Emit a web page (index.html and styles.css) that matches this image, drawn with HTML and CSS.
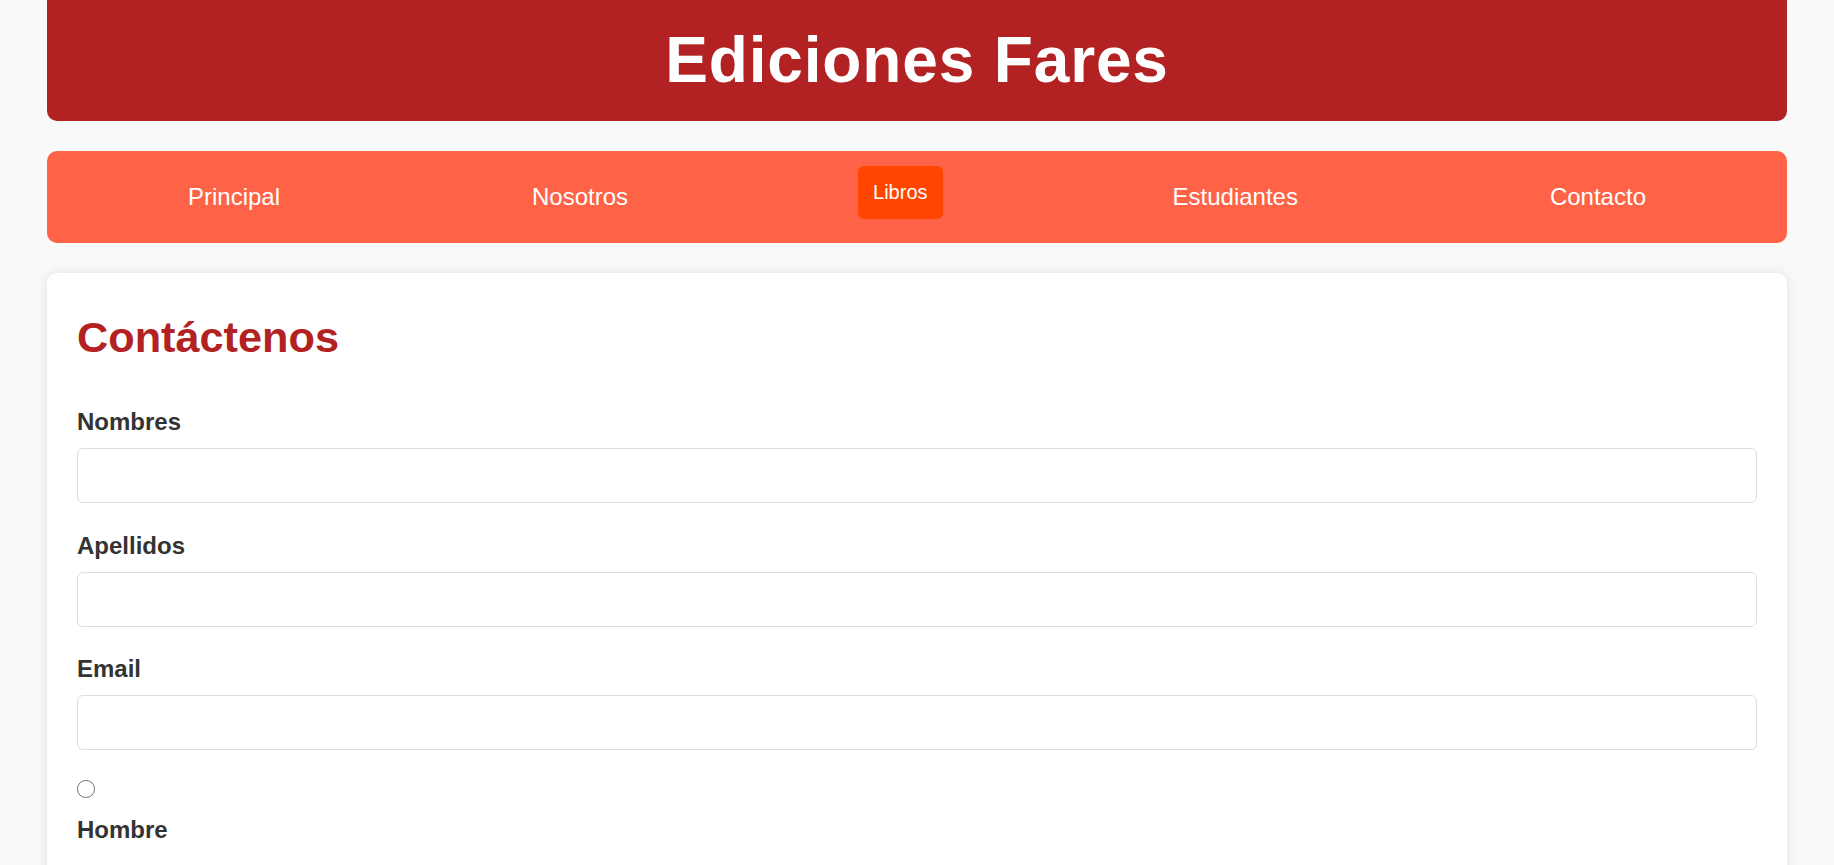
FILE: index.html
```html
<!DOCTYPE html>
<html lang="es">
<head>
<meta charset="utf-8">
<title>Ediciones Fares - Contacto</title>
<link rel="stylesheet" href="styles.css">
</head>
<body>
<div class="page">
  <header class="site-header">
    <h1 class="site-title">Ediciones Fares</h1>
  </header>
  <nav class="main-nav">
    <a class="nav-link" href="#">Principal</a>
    <a class="nav-link" href="#">Nosotros</a>
    <a class="nav-link nav-link-active" href="#">Libros</a>
    <a class="nav-link" href="#">Estudiantes</a>
    <a class="nav-link" href="#">Contacto</a>
  </nav>
  <main class="card">
    <h2 class="card-title">Contáctenos</h2>
    <form class="contact-form">
      <label class="field-label" for="nombres">Nombres</label>
      <input class="field-input" type="text" id="nombres">
      <label class="field-label" for="apellidos">Apellidos</label>
      <input class="field-input" type="text" id="apellidos">
      <label class="field-label" for="email">Email</label>
      <input class="field-input" type="email" id="email">
      <input class="radio" type="radio" name="sexo" id="hombre">
      <label class="field-label" for="hombre">Hombre</label>
    </form>
  </main>
</div>
</body>
</html>
```

FILE: styles.css
```css
html, body {
  margin: 0;
  padding: 0;
}

body {
  background: #f9f9f9;
  font-family: "Liberation Sans", Arial, sans-serif;
  color: #333;
  overflow: hidden;
}

.page {
  padding: 0 47px;
}

.site-header {
  background: #b22222;
  border-radius: 0 0 10px 10px;
  padding: 23px 0 24px;
  text-align: center;
}

.site-title {
  margin: 0;
  font-size: 64px;
  font-weight: bold;
  letter-spacing: 0.85px;
  line-height: normal;
  color: #fff;
}

.main-nav {
  margin-top: 30px;
  background: #ff6347;
  border-radius: 10px;
  padding: 15px;
  display: flex;
  justify-content: space-around;
  align-items: flex-start;
}

.nav-link {
  font-size: 24px;
  color: #fff;
  text-decoration: none;
  padding: 17px 22px;
  line-height: normal;
}

.nav-link-active {
  font-size: 20px;
  padding: 15px;
  background: #ff4500;
  border-radius: 6px;
}

.card {
  margin-top: 30px;
  background: #fff;
  border-radius: 10px;
  box-shadow: 0 0 12px rgba(0, 0, 0, 0.1);
  padding: 40px 30px 30px;
}

.card-title {
  margin: 0 0 46px;
  font-size: 43.25px;
  font-weight: bold;
  color: #b22222;
  line-height: normal;
}

.contact-form {
  display: flex;
  flex-direction: column;
  align-items: stretch;
}

.field-label {
  display: block;
  font-size: 24px;
  font-weight: bold;
  color: #333;
  margin-bottom: 12px;
  line-height: normal;
}

.field-input {
  display: block;
  box-sizing: border-box;
  width: 100%;
  height: 55px;
  border: 1px solid #ddd;
  border-radius: 6px;
  margin: 0 0 28.5px;
  font-size: 20px;
  background: #fff;
}

.radio {
  appearance: none;
  -webkit-appearance: none;
  display: block;
  box-sizing: border-box;
  width: 17.5px;
  height: 17.5px;
  border: 1.5px solid #6f6f6f;
  border-radius: 50%;
  margin: 1.5px 0 18.5px;
  background: #fff;
}
```
